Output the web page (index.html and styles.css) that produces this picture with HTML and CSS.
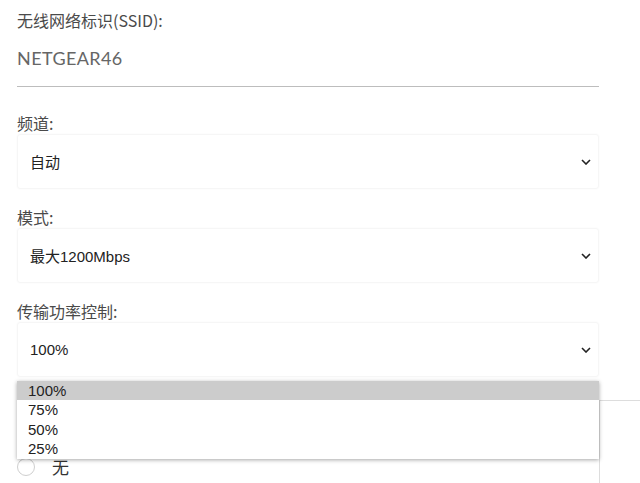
FILE: index.html
```html
<!DOCTYPE html>
<html lang="zh-CN">
<head>
    <meta charset="UTF-8">
    <meta name="viewport" content="width=device-width, initial-scale=1.0">
    <title>无线设置</title>
    <link rel="stylesheet" href="styles.css">
</head>
<body>
    <main class="form">
        <div class="field field-ssid">
            <label class="field-label" for="ssid">无线网络标识(SSID):</label>
            <div class="text-input" id="ssid">NETGEAR46</div>
        </div>

        <div class="field field-first">
            <label class="field-label">频道:</label>
            <div class="select-box">
                <span class="select-value">自动</span>
                <svg class="chevron" width="10" height="6" viewBox="0 0 10 6"><path d="M1 1l4 4 4-4" fill="none" stroke="#222" stroke-width="1.6"/></svg>
            </div>
        </div>

        <div class="field">
            <label class="field-label">模式:</label>
            <div class="select-box">
                <span class="select-value">最大1200Mbps</span>
                <svg class="chevron" width="10" height="6" viewBox="0 0 10 6"><path d="M1 1l4 4 4-4" fill="none" stroke="#222" stroke-width="1.6"/></svg>
            </div>
        </div>

        <div class="field field-power">
            <label class="field-label">传输功率控制:</label>
            <div class="select-box">
                <span class="select-value">100%</span>
                <svg class="chevron" width="10" height="6" viewBox="0 0 10 6"><path d="M1 1l4 4 4-4" fill="none" stroke="#222" stroke-width="1.6"/></svg>
            </div>
            <ul class="dropdown">
                <li class="option selected">100%</li>
                <li class="option">75%</li>
                <li class="option">50%</li>
                <li class="option">25%</li>
            </ul>
        </div>
    </main>

    <section class="bottom">
        <div class="radio-col">
            <div class="radio-row">
                <span class="radio"></span>
                <span class="radio-label">无</span>
            </div>
        </div>
        <div class="side-panel"></div>
    </section>
</body>
</html>
```

FILE: styles.css
```css
body {
    margin: 0;
    padding: 0;
    background: #fff;
    color: #333;
    font-family: "Liberation Sans", "Noto Sans CJK SC", sans-serif;
    overflow: hidden;
}

.form {
    width: 582px;
    padding: 10px 0 0 17px;
}

.field {
    margin-top: 18px;
    position: relative;
}

.field-ssid {
    margin-top: 0;
}

.field-first {
    margin-top: 26px;
}

.field-label {
    display: block;
    height: 21px;
    line-height: 21px;
    font-size: 16px;
    color: #4a4a4a;
    font-family: "Noto Sans CJK SC", "Liberation Sans", sans-serif;
}

.text-input {
    height: 55px;
    line-height: 55px;
    font-family: Lato, "Noto Sans", sans-serif;
    font-size: 18px;
    letter-spacing: 0.4px;
    color: #666;
    border-bottom: 1px solid #bdbdbd;
}

.select-box {
    height: 55px;
    display: flex;
    align-items: center;
    justify-content: space-between;
    padding: 0 7px 0 12px;
    box-sizing: border-box;
    border: 1px solid #f6f6f6;
    border-radius: 3px;
    box-shadow: 0 0 2px rgba(0, 0, 0, 0.04);
}

.select-value {
    font-size: 15px;
    color: #222;
    font-family: "Liberation Sans", "Noto Sans CJK SC", sans-serif;
}

.chevron {
    display: block;
}

.dropdown {
    position: absolute;
    left: 0;
    top: 80px;
    width: 582px;
    margin: 0;
    padding: 0;
    list-style: none;
    background: #fff;
    box-shadow: 0 1px 4px rgba(0, 0, 0, 0.35);
    z-index: 2;
}

.option {
    height: 19.4px;
    line-height: 19.4px;
    padding-left: 11px;
    font-size: 15px;
    color: #222;
}

.option.selected {
    background: #cccccc;
}

.bottom {
    display: flex;
    margin-top: 23px;
    height: 90px;
}

.radio-col {
    width: 582px;
    padding-left: 17px;
}

.radio-row {
    display: flex;
    align-items: center;
    margin-top: 58px;
}

.radio {
    width: 18px;
    height: 18px;
    border: 1px solid #cfcfcf;
    border-radius: 50%;
    box-sizing: border-box;
}

.radio-label {
    margin-left: 17px;
    font-size: 17px;
    line-height: 18px;
    color: #333;
    font-family: "Noto Sans CJK SC", sans-serif;
}

.side-panel {
    flex: 1;
    border-top: 1px solid #ddd;
    border-left: 1px solid #ddd;
}
```
